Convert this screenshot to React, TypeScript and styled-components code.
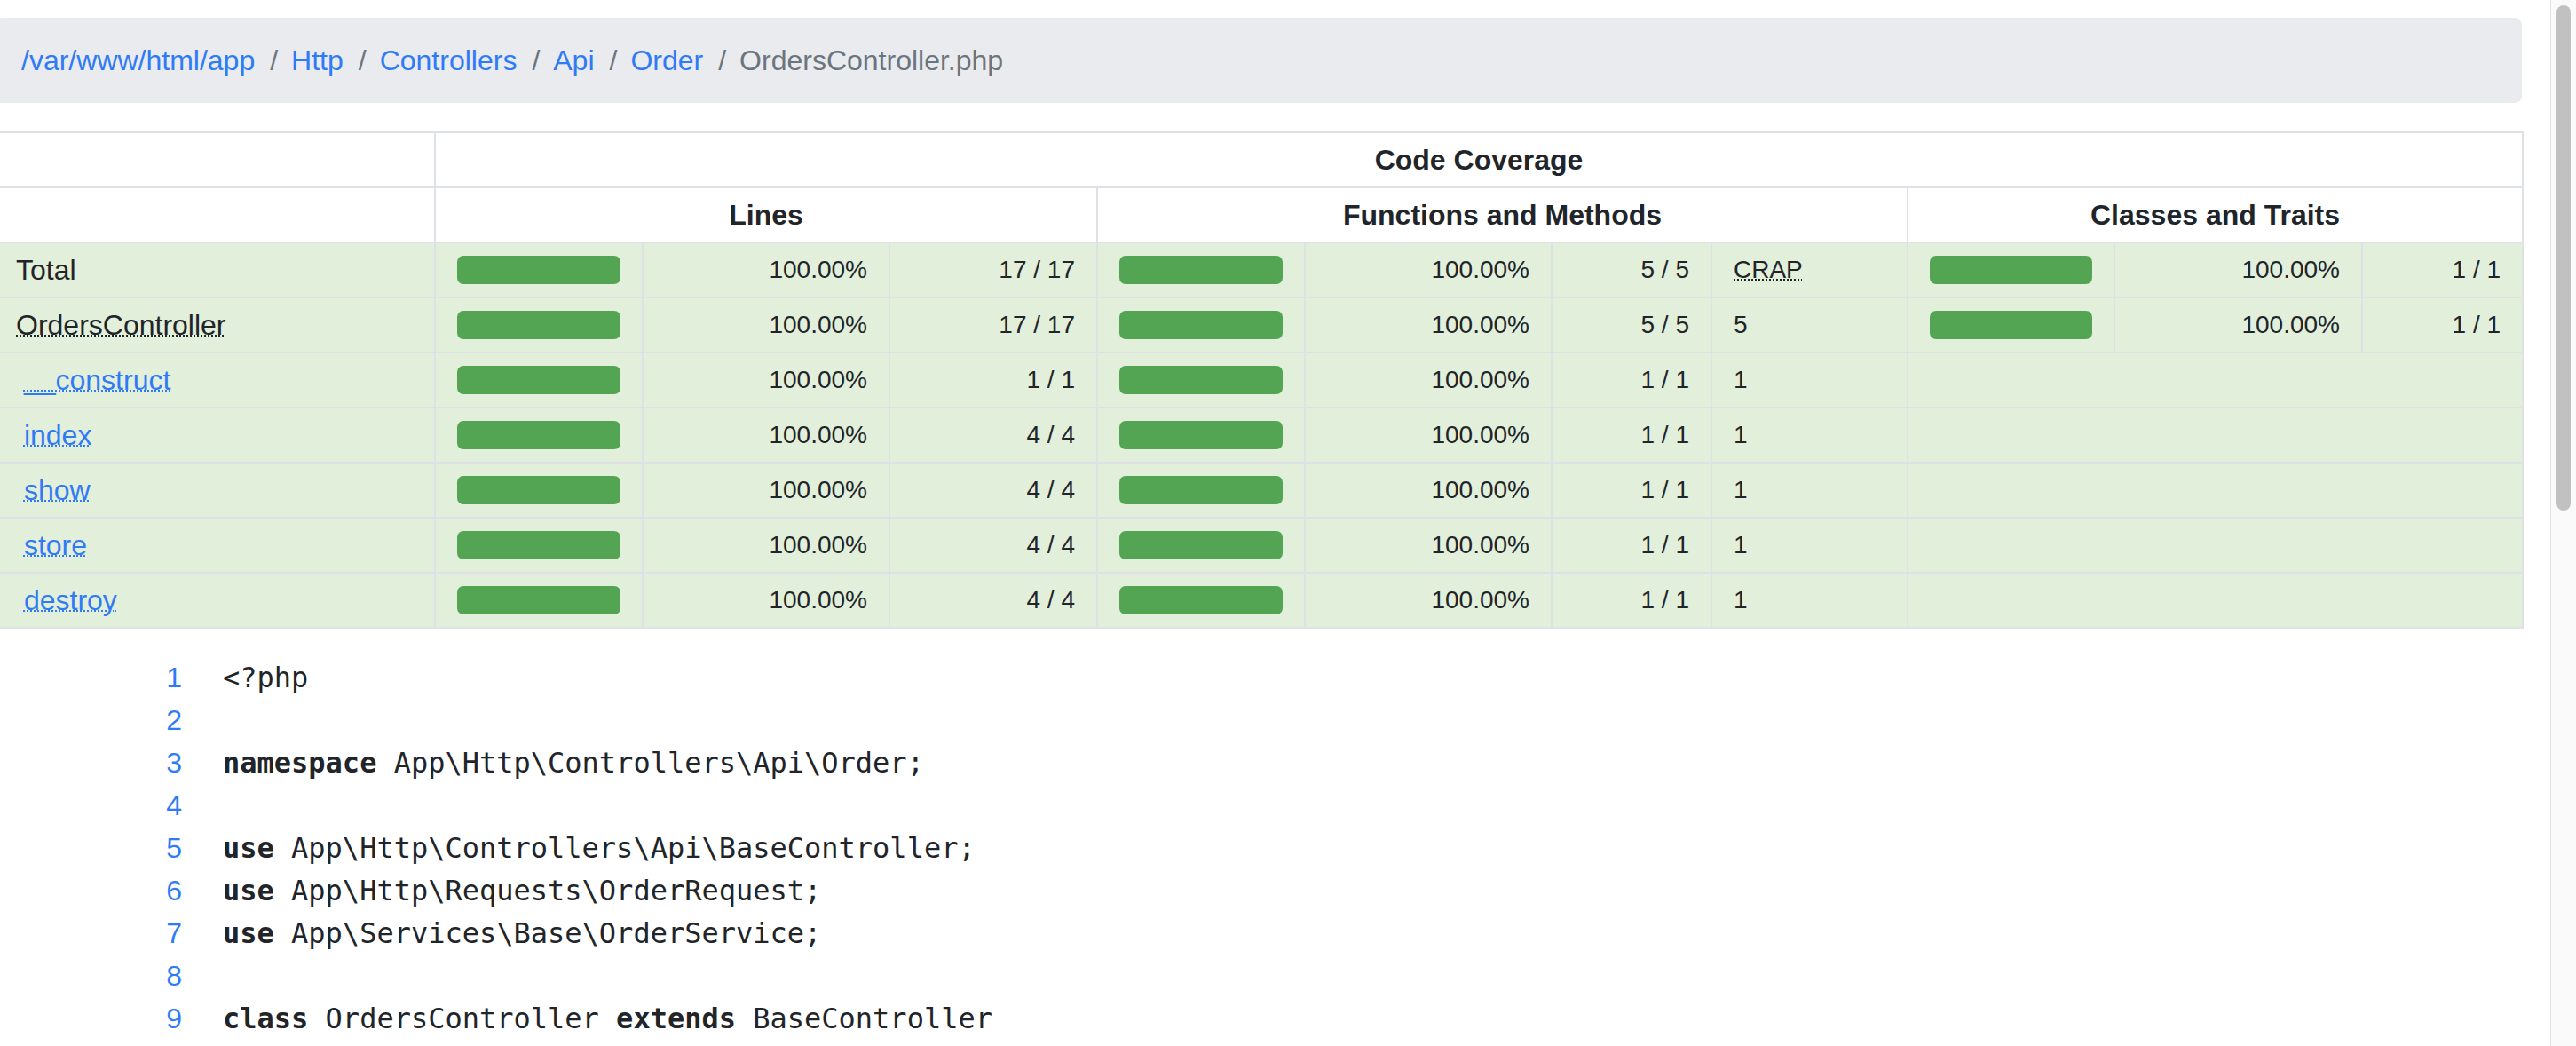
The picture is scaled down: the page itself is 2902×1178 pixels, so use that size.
import React from "react";
import styled, { createGlobalStyle } from "styled-components";

const GlobalStyle = createGlobalStyle`
  html, body {
    margin: 0;
    padding: 0;
    height: 100%;
    overflow: hidden;
    background: #ffffff;
  }
  body {
    font-family: "Liberation Sans", Arial, Helvetica, sans-serif;
    color: #212529;
  }
`;

const BLUE = "#2f7bf6";
const GRAY = "#6c757d";
const BORDER = "#dee2e6";
const GREEN_BG = "#e2efdb";
const GREEN_BAR = "#53a553";

const Shell = styled.div`
  display: flex;
  height: 100vh;
  width: 100vw;
`;

const Main = styled.main`
  flex: 1;
  min-width: 0;
  overflow: hidden;
`;

const ScrollTrack = styled.div`
  flex: 0 0 29px;
  box-sizing: border-box;
  border-left: 1px solid #e6e6e6;
  background: #fafafa;
  padding: 6px 6px 0 6px;
`;

const ScrollThumb = styled.div`
  height: 569px;
  border-radius: 8px;
  background: #c1c1c1;
`;

const Page = styled.div`
  width: 2847px;
  margin-left: -6px;
  padding: 20px 0 16px;
`;

const Crumbs = styled.ol`
  display: flex;
  align-items: center;
  height: 96px;
  margin: 0 0 32px;
  padding: 0 0 0 30px;
  list-style: none;
  background: #e9ebef;
  border-radius: 8px;
  font-size: 32px;
`;

const Crumb = styled.li<{ $active?: boolean }>`
  color: ${(p) => (p.$active ? GRAY : BLUE)};
  &:not(:first-child)::before {
    content: "/";
    color: ${GRAY};
    padding: 0 15px 0 17px;
  }
`;

const CoverageTable = styled.table`
  width: 2847px;
  border-collapse: collapse;
  table-layout: fixed;
  font-size: 32px;
`;

const Row = styled.tr`
  height: 62px;
`;

const HeadCell = styled.th`
  padding: 0 24px;
  border: 2px solid ${BORDER};
  background: #ffffff;
  font-weight: 700;
  text-align: center;
  color: #212529;
`;

const Cell = styled.td<{ $align?: "left" | "right"; $small?: boolean; $name?: boolean }>`
  padding: 0 24px 0 ${(p) => (p.$name ? "22px" : "24px")};
  border: 2px solid ${BORDER};
  background: ${GREEN_BG};
  text-align: ${(p) => p.$align ?? "left"};
  font-size: ${(p) => (p.$small ? "28px" : "32px")};
  vertical-align: middle;
  white-space: nowrap;
`;

const Progress = styled.div`
  height: 32px;
  border-radius: 7px;
  background: #e9ecef;
  overflow: hidden;
`;

const ProgressFill = styled.div`
  height: 100%;
  background: ${GREEN_BAR};
`;

const Abbr = styled.abbr`
  text-decoration: underline dotted;
  text-decoration-thickness: 2px;
  cursor: help;
`;

const MethodLink = styled.a`
  color: ${BLUE};
  text-decoration: none;
`;

const CodeTable = styled.table`
  margin-top: 31px;
  border-collapse: collapse;
  font-size: 32px;
  line-height: 48px;
`;

const LineNo = styled.td`
  width: 211px;
  padding: 0;
  text-align: right;
  vertical-align: top;
  font-family: "Liberation Sans", Arial, sans-serif;
  color: ${BLUE};
`;

const CodeCell = styled.td`
  padding: 0 0 0 46px;
  font-family: "DejaVu Sans Mono", Menlo, monospace;
  white-space: pre;
  color: #212529;
`;

const Keyword = styled.span`
  font-weight: 700;
`;

type Kind = "total" | "class" | "method";
interface CovRow {
  name: string;
  kind: Kind;
  lines: [number, number];
  funcs: [number, number];
  crap: string;
  classes?: [number, number];
}

const rows: CovRow[] = [
  { name: "Total", kind: "total", lines: [17, 17], funcs: [5, 5], crap: "CRAP", classes: [1, 1] },
  { name: "OrdersController", kind: "class", lines: [17, 17], funcs: [5, 5], crap: "5", classes: [1, 1] },
  { name: "__construct", kind: "method", lines: [1, 1], funcs: [1, 1], crap: "1" },
  { name: "index", kind: "method", lines: [4, 4], funcs: [1, 1], crap: "1" },
  { name: "show", kind: "method", lines: [4, 4], funcs: [1, 1], crap: "1" },
  { name: "store", kind: "method", lines: [4, 4], funcs: [1, 1], crap: "1" },
  { name: "destroy", kind: "method", lines: [4, 4], funcs: [1, 1], crap: "1" },
];

const colWidths = [495, 234, 278, 234, 234, 278, 180, 221, 233, 279, 181];

const pct = (a: number, b: number) => (b === 0 ? 0 : (a / b) * 100);
const fmtPct = (a: number, b: number) => `${pct(a, b).toFixed(2)}%`;
const fmtFrac = (a: number, b: number) => `${a}\u00a0/\u00a0${b}`;

function Bar({ value }: { value: number }) {
  return (
    <Progress>
      <ProgressFill style={{ width: `${value}%` }} />
    </Progress>
  );
}

function NameCell({ row }: { row: CovRow }) {
  if (row.kind === "total") return <Cell $name>{row.name}</Cell>;
  if (row.kind === "class")
    return (
      <Cell $name>
        <Abbr title="App\Http\Controllers\Api\Order\OrdersController">{row.name}</Abbr>
      </Cell>
    );
  return (
    <Cell $name>
      <MethodLink href={`#${row.name}`}>
        {"\u00a0"}
        <Abbr title={`${row.name}()`}>{row.name}</Abbr>
      </MethodLink>
    </Cell>
  );
}

type Seg = string | { kw: string };
const code: Seg[][] = [
  ["<?php"],
  [""],
  [{ kw: "namespace" }, " App\\Http\\Controllers\\Api\\Order;"],
  [""],
  [{ kw: "use" }, " App\\Http\\Controllers\\Api\\BaseController;"],
  [{ kw: "use" }, " App\\Http\\Requests\\OrderRequest;"],
  [{ kw: "use" }, " App\\Services\\Base\\OrderService;"],
  [""],
  [{ kw: "class" }, " OrdersController ", { kw: "extends" }, " BaseController"],
  ["{"],
  ["    ", { kw: "public" }, " ", { kw: "function" }, " __construct(", { kw: "private" }, " OrderService $orderService) {}"],
  [""],
  ["    ", { kw: "public" }, " ", { kw: "function" }, " index()"],
  ["    {"],
  ["        $orders = $this->orderService->all();"],
  ["        ", { kw: "return" }, " $this->sendResponse($orders);"],
  ["    }"],
  [""],
  ["    ", { kw: "public" }, " ", { kw: "function" }, " show(", { kw: "int" }, " $id)"],
  ["    {"],
  ["        $order = $this->orderService->find($id);"],
  ["        ", { kw: "return" }, " $this->sendResponse($order);"],
  ["    }"],
  [""],
  ["    ", { kw: "public" }, " ", { kw: "function" }, " store(OrderRequest $request)"],
  ["    {"],
  ["        $order = $this->orderService->create($request->validated());"],
  ["        ", { kw: "return" }, " $this->sendResponse($order);"],
  ["    }"],
  [""],
  ["    ", { kw: "public" }, " ", { kw: "function" }, " destroy(", { kw: "int" }, " $id)"],
  ["    {"],
  ["        ", { kw: "return" }, " $this->sendResponse($this->orderService->delete($id));"],
  ["}"],
];

export default function App() {
  return (
    <>
      <GlobalStyle />
      <Shell>
        <Main>
          <Page>
            <nav aria-label="breadcrumb">
              <Crumbs>
                <Crumb>/var/www/html/app</Crumb>
                <Crumb>Http</Crumb>
                <Crumb>Controllers</Crumb>
                <Crumb>Api</Crumb>
                <Crumb>Order</Crumb>
                <Crumb $active>OrdersController.php</Crumb>
              </Crumbs>
            </nav>

            <CoverageTable>
              <colgroup>
                {colWidths.map((w, i) => (
                  <col key={i} style={{ width: w }} />
                ))}
              </colgroup>
              <thead>
                <Row>
                  <HeadCell />
                  <HeadCell colSpan={10}>Code Coverage</HeadCell>
                </Row>
                <Row>
                  <HeadCell />
                  <HeadCell colSpan={3}>Lines</HeadCell>
                  <HeadCell colSpan={4}>Functions and Methods</HeadCell>
                  <HeadCell colSpan={3}>Classes and Traits</HeadCell>
                </Row>
              </thead>
              <tbody>
                {rows.map((r) => (
                  <Row key={r.name}>
                    <NameCell row={r} />
                    <Cell>
                      <Bar value={pct(r.lines[0], r.lines[1])} />
                    </Cell>
                    <Cell $align="right" $small>
                      {fmtPct(r.lines[0], r.lines[1])}
                    </Cell>
                    <Cell $align="right" $small>
                      {fmtFrac(r.lines[0], r.lines[1])}
                    </Cell>
                    <Cell>
                      <Bar value={pct(r.funcs[0], r.funcs[1])} />
                    </Cell>
                    <Cell $align="right" $small>
                      {fmtPct(r.funcs[0], r.funcs[1])}
                    </Cell>
                    <Cell $align="right" $small>
                      {fmtFrac(r.funcs[0], r.funcs[1])}
                    </Cell>
                    <Cell $small>
                      {r.kind === "total" ? (
                        <Abbr title="Change Risk Anti-Patterns (CRAP) Index">{r.crap}</Abbr>
                      ) : (
                        r.crap
                      )}
                    </Cell>
                    {r.classes ? (
                      <>
                        <Cell>
                          <Bar value={pct(r.classes[0], r.classes[1])} />
                        </Cell>
                        <Cell $align="right" $small>
                          {fmtPct(r.classes[0], r.classes[1])}
                        </Cell>
                        <Cell $align="right" $small>
                          {fmtFrac(r.classes[0], r.classes[1])}
                        </Cell>
                      </>
                    ) : (
                      <Cell colSpan={3} />
                    )}
                  </Row>
                ))}
              </tbody>
            </CoverageTable>

            <CodeTable>
              <tbody>
                {code.map((segs, i) => (
                  <tr key={i}>
                    <LineNo>{i + 1}</LineNo>
                    <CodeCell>
                      {segs.map((s, j) =>
                        typeof s === "string" ? (
                          <React.Fragment key={j}>{s}</React.Fragment>
                        ) : (
                          <Keyword key={j}>{s.kw}</Keyword>
                        )
                      )}
                    </CodeCell>
                  </tr>
                ))}
              </tbody>
            </CodeTable>
          </Page>
        </Main>
        <ScrollTrack aria-hidden="true">
          <ScrollThumb />
        </ScrollTrack>
      </Shell>
    </>
  );
}
